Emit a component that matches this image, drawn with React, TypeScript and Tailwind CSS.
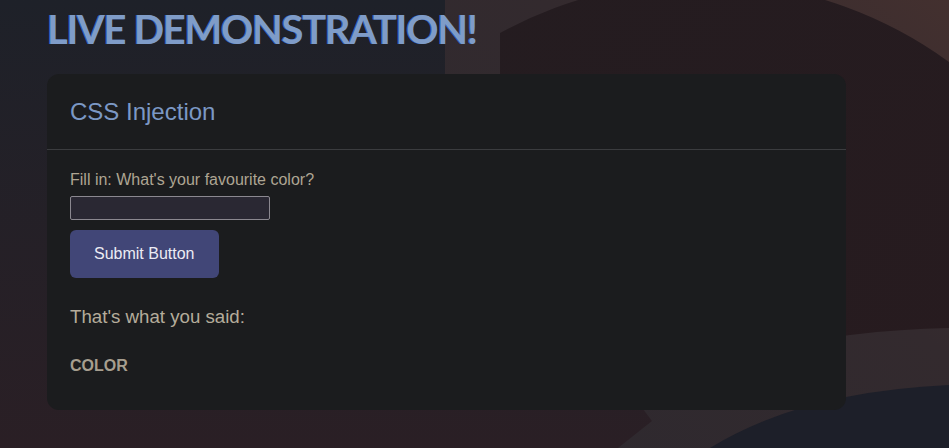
import React, { useState } from "react";

function Backdrop() {
  return (
    <svg
      className="absolute inset-0 h-full w-full"
      viewBox="0 0 949 448"
      preserveAspectRatio="none"
      aria-hidden="true"
    >
      <defs>
        <linearGradient id="ring" x1="0" y1="1" x2="1" y2="0">
          <stop offset="0" stopColor="#2d292f" />
          <stop offset="0.6" stopColor="#332a2e" />
          <stop offset="1" stopColor="#43302f" />
        </linearGradient>
        <linearGradient id="inner" x1="0" y1="0" x2="1" y2="1">
          <stop offset="0" stopColor="#241c20" />
          <stop offset="1" stopColor="#271b1f" />
        </linearGradient>
      </defs>
      <path d="M445 0 L949 0 L949 448 L618 448 L652 421 L640 405 L445 405 Z" fill="url(#ring)" />
      <path d="M500 405 L500 33 A420 420 0 0 1 949 62 L949 328 Q760 332 600 405 Z" fill="url(#inner)" />
      <path d="M710 448 Q800 392 949 385 L949 448 Z" fill="#1d1f29" />
    </svg>
  );
}

export default function App() {
  const [value, setValue] = useState("");
  const [said, setSaid] = useState("color");

  return (
    <div className="relative h-[448px] w-full overflow-hidden bg-linear-to-b from-[#1e2129] to-[#2a1f25] font-['Liberation_Sans',Arial,sans-serif]">
      <Backdrop />
      <div className="relative px-[47px] pt-[7px]">
        <h1 className="font-['Lato',sans-serif] text-[40px] font-bold uppercase leading-[44px] tracking-[-1.3px] text-[#7f9cc8] [text-shadow:-1px_0_0_#2f5fb8]">
          Live Demonstration!
        </h1>

        <div className="mt-[23px] w-[799px] rounded-xl bg-[#1b1c1e]">
          <div className="border-b border-[#3b3c3f] px-[23px] pb-[24px] pt-[24px]">
            <h2 className="text-[24px] leading-[27px] text-[#7b98c5]">CSS Injection</h2>
          </div>

          <div className="px-[23px] pb-[35px] pt-[21px]">
            <label className="block text-[16px] leading-[18px] text-[#aea593]">
              Fill in: What's your favourite color?
            </label>
            <input
              value={value}
              onChange={(e) => setValue(e.target.value)}
              className="mt-[7px] block h-6 w-[200px] rounded-[2px] border border-[#8b8890] bg-[#2a2833] px-1 text-sm text-[#ddd] outline-none"
            />
            <button
              onClick={() => setSaid(value || "color")}
              className="mt-2.5 h-12 rounded-md bg-[#414677] px-6 text-[16px] text-[#ececf4]"
            >
              Submit Button
            </button>

            <p className="mt-7 text-[18.7px] leading-[21px] text-[#b5ac9b]">That's what you said:</p>
            <p className="mt-[30px] text-[16px] font-bold uppercase leading-[18px] text-[#a69e8f]">{said}</p>
          </div>
        </div>
      </div>
    </div>
  );
}
